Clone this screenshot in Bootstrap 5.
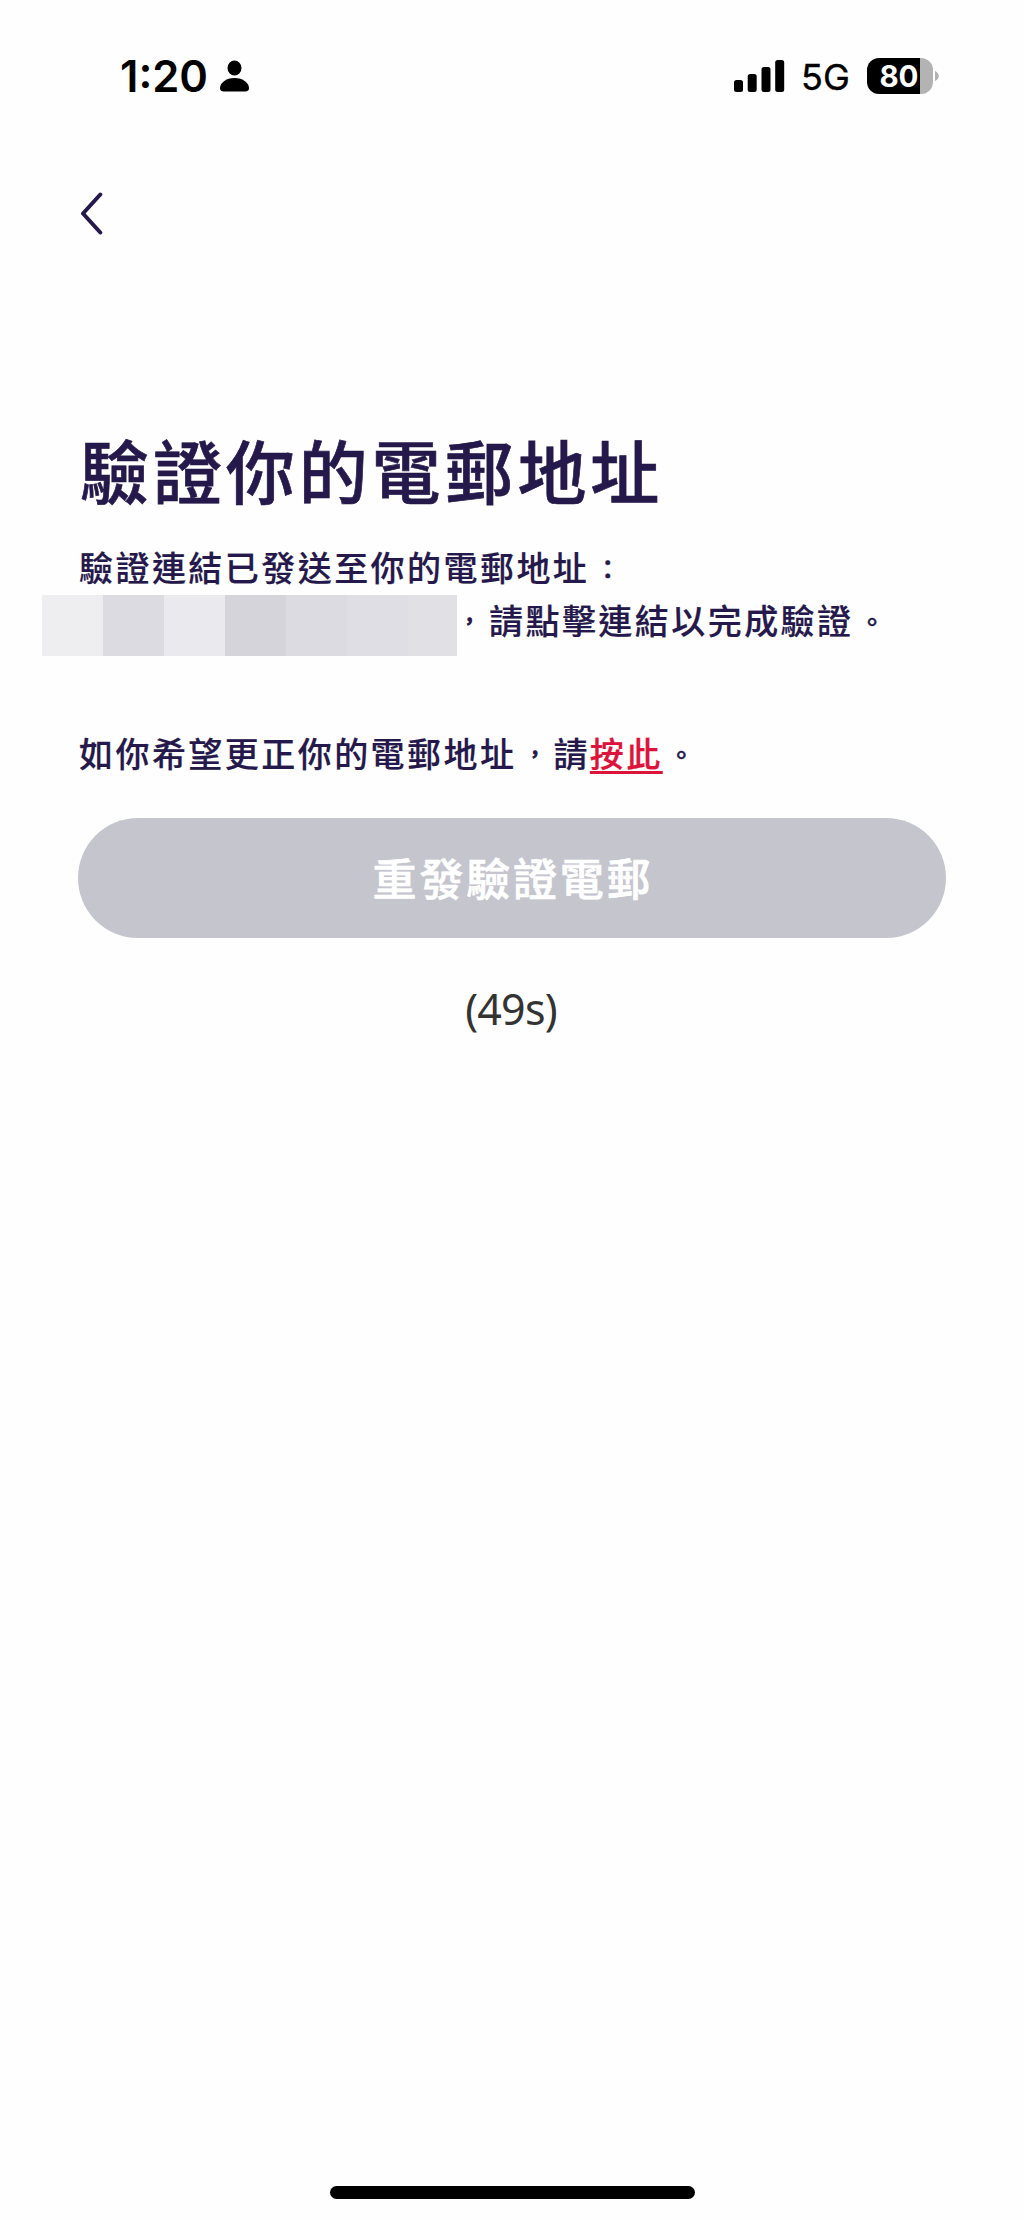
<!DOCTYPE html>
<html lang="zh-Hant">
<head>
<meta charset="utf-8">
<meta name="viewport" content="width=device-width, initial-scale=1">
<title>驗證你的電郵地址</title>
<link href="https://cdn.jsdelivr.net/npm/bootstrap@5.3.0/dist/css/bootstrap.min.css" rel="stylesheet">
<style>
  body { background: #fefefe; color: #25184a; font-family: "Noto Sans CJK TC", sans-serif; }
  .phone-screen { height: 2220px; overflow: hidden; }
  .status-row { height: 152px; padding: 0 85px 0 120px; font-family: Inter, sans-serif; color: #000; }
  .clock { font-size: 43.5px; font-weight: 600; line-height: 52px; letter-spacing: 0; width: 100px; }
  .net-type { font-size: 36px; line-height: 44px; width: 66px; margin-left: 16px; padding-top: 1px; -webkit-text-stroke: .4px #000; }
  .battery { width: 66px; height: 36px; border-radius: 12px; background: linear-gradient(90deg, #000 53px, #b3b3b3 53px); color: #fff; font-size: 29.5px; font-weight: 700; line-height: 37px; padding-left: 12.5px; letter-spacing: -.1px; }
  .back-btn { height: 124px; padding: 0 0 0 80px; }
  .page-body { padding: 143px 78px 0 78px; }
  .page-title { font-size: 69px; font-weight: 500; letter-spacing: 3.9px; line-height: 100px; margin: 0 0 22px 2px; -webkit-text-stroke: .7px #25184a; }
  .msg { font-size: 34px; font-weight: 500; letter-spacing: 2.45px; line-height: 52px; padding-left: 1px; -webkit-text-stroke: .2px; }
  .masked-row { margin: 2px 0 0 -36px; height: 61px; }
  .masked-row .msg { padding-left: 0; line-height: 49px; }
  .mosaic i { display: block; width: 61px; height: 61px; }
  .mosaic i:last-child { width: 49px; }
  .punct { display: inline-block; width: 37px; font-size: 26px; line-height: 1; text-align: center; letter-spacing: 0; position: relative; top: -2px; -webkit-text-stroke: .6px; }
  .comma { font-size: 20px; top: -5px; -webkit-text-stroke: 1px; }
  .masked-row .comma { width: 32px; padding-right: 7px; }
  .change-row { margin-top: 71px; }
  .here-link { color: #dc143c; text-decoration: underline; text-decoration-thickness: 3px; text-underline-offset: 4px; }
  .resend, .resend:disabled { height: 120px; margin-top: 39px; padding: 0 0 3px 2px; background: #c5c5ce; color: #fff; opacity: 1; border: 0; font-size: 44px; font-weight: 500; letter-spacing: 2.8px; -webkit-text-stroke: .7px #fff; }
  .countdown { font-family: "Noto Sans", sans-serif; font-size: 43px; line-height: 60px; color: #333; margin-top: 41px; letter-spacing: -.8px; padding-right: 2px; }
  .home-bar { width: 365px; height: 13px; border-radius: 7px; background: #000; margin-bottom: 21px; }
</style>
</head>
<body>
<div class="phone-screen d-flex flex-column">
  <header class="status-row d-flex align-items-center justify-content-between">
    <div class="d-flex align-items-center">
      <span class="clock">1:20</span>
      <svg width="29" height="32" viewBox="0 0 29 32"><ellipse cx="14.5" cy="8" rx="7" ry="7.6"/><path d="M4 31.5C1 31.5 0 30 0 28c0-5 6-10 14.500-10S29 23 29 28c0 2-1 3.500-4 3.500Z"/></svg>
    </div>
    <div class="d-flex align-items-center">
      <svg width="51" height="32" viewBox="0 0 51 32"><rect y="20" width="9" height="12" rx="2.500"/><rect x="13.700" y="14" width="9" height="18" rx="2.500"/><rect x="27.500" y="7" width="9" height="25" rx="2.500"/><rect x="41.200" width="9" height="32" rx="2.500"/></svg>
      <span class="net-type">5G</span>
      <div class="battery">80</div>
      <svg width="6" height="12" viewBox="0 0 6 12"><path d="M2 1C7 3 7 9 2 11Z" fill="#b3b3b3"/></svg>
    </div>
  </header>
  <nav class="back-btn d-flex align-items-center">
    <button class="btn p-0 border-0 lh-1" aria-label="返回"><svg width="24" height="44" viewBox="0 0 24 44" fill="none" stroke="#25184a" stroke-width="4" stroke-linecap="round" stroke-linejoin="round"><path d="M20.300 2.500 3 21.500l17.300 19"/></svg></button>
  </nav>
  <main class="page-body">
    <h1 class="page-title text-nowrap">驗證你的電郵地址</h1>
    <div class="msg text-nowrap">驗證連結已發送至你的電郵地址<span class="punct">：</span></div>
    <div class="masked-row d-flex">
      <div class="mosaic d-flex"><i style="background:#eeeef0"></i><i style="background:#dddbe2"></i><i style="background:#e9e9ee"></i><i style="background:#d6d4db"></i><i style="background:#dddbe2"></i><i style="background:#dfdee4"></i><i style="background:#e1e1e5"></i></div>
      <div class="msg text-nowrap"><span class="punct comma">，</span>請點擊連結以完成驗證<span class="punct">。</span></div>
    </div>
    <div class="msg change-row text-nowrap">如你希望更正你的電郵地址<span class="punct comma">，</span>請<a href="#" class="here-link">按此</a><span class="punct">。</span></div>
    <button class="resend btn rounded-pill w-100 d-block" disabled>重發驗證電郵</button>
    <div class="countdown text-center">(49s)</div>
  </main>
  <div class="home-bar mt-auto mx-auto"></div>
</div>
<script src="https://cdn.jsdelivr.net/npm/bootstrap@5.3.0/dist/js/bootstrap.bundle.min.js"></script>
</body>
</html>
